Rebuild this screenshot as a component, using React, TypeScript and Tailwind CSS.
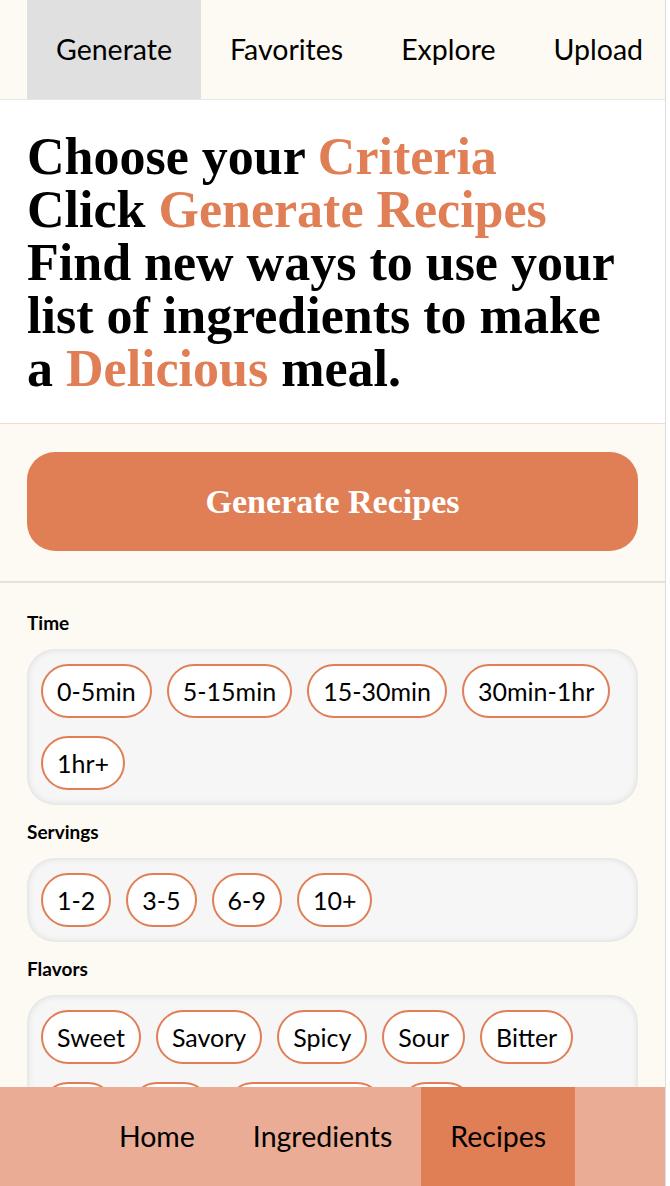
import React from "react";

const timeOptions = ["0-5min", "5-15min", "15-30min", "30min-1hr", "1hr+"];
const servingOptions = ["1-2", "3-5", "6-9", "10+"];
const flavorOptions = ["Sweet", "Savory", "Spicy", "Sour", "Bitter", "Hot", "Mild", "Bittersweet", "Tart"];

const serif = { fontFamily: '"Liberation Serif", "DejaVu Serif", serif' };

function Chip({ label }: { label: string }) {
	return (
		<button className="h-[54px] px-[14px] rounded-full border-2 border-[#e07e55] bg-white text-[25px] text-black leading-none">
			{label}
		</button>
	);
}

function Criteria({ title, options }: { title: string; options: string[] }) {
	return (
		<div>
			<p className="text-[19px] font-bold leading-[20px] mb-4 text-black">{title}</p>
			<div className="flex flex-wrap gap-x-[15px] gap-y-[18px] px-[14px] py-[15px] bg-[#f6f6f6] rounded-[28px] shadow-[inset_0_0_7px_rgba(0,0,0,0.13)]">
				{options.map((o) => (
					<Chip key={o} label={o} />
				))}
			</div>
		</div>
	);
}

export default function App() {
	return (
		<div className="min-h-screen bg-white" style={{ fontFamily: 'Lato, "Liberation Sans", sans-serif' }}>
			<div className="w-[666px] border-r border-[#dedede] bg-[#fdfaf3] min-h-screen">
				{/* Top tabs */}
				<nav className="flex h-[100px] pl-[27px] border-b border-[#e6e6e6] overflow-hidden">
					{["Generate", "Favorites", "Explore", "Upload"].map((t, i) => (
						<div
							key={t}
							className={`flex items-center px-[29px] shrink-0 text-[28.5px] text-black ${i === 0 ? "bg-[#e0e0e0]" : ""}`}
						>
							{t}
						</div>
					))}
				</nav>

				{/* Intro */}
				<section className="bg-white px-[27px] pt-[30px] pb-[28px]">
					<h1 className="text-[52px] leading-[53px] font-bold text-black whitespace-nowrap" style={serif}>
						Choose your <span className="text-[#e07e55]">Criteria</span>
						<br />
						Click <span className="text-[#e07e55]">Generate Recipes</span>
						<br />
						Find new ways to use your
						<br />
						list of ingredients to make
						<br />
						a <span className="text-[#e07e55]">Delicious</span> meal.
					</h1>
				</section>

				{/* Generate button */}
				<section className="border-y border-[#f1dccf] px-[27px] pt-[28px] pb-[30px]">
					<button
						className="w-full h-[99px] rounded-[28px] bg-[#e07e55] text-white text-[34px] font-bold"
						style={serif}
					>
						Generate Recipes
					</button>
				</section>

				{/* Criteria */}
				<section className="border-t border-[#e2e2e2] px-[27px] pt-[30px] pb-[140px] flex flex-col gap-[17px]">
					<Criteria title="Time" options={timeOptions} />
					<Criteria title="Servings" options={servingOptions} />
					<Criteria title="Flavors" options={flavorOptions} />
				</section>
			</div>

			{/* Bottom navigation */}
			<nav className="fixed bottom-0 left-0 w-[665px] h-[99px] bg-[#eaac94] flex justify-center">
				{["Home", "Ingredients", "Recipes"].map((t) => (
					<div
						key={t}
						className={`flex items-center px-[29px] text-[28.5px] text-black ${t === "Recipes" ? "bg-[#e07e55]" : ""}`}
					>
						{t}
					</div>
				))}
			</nav>
		</div>
	);
}
